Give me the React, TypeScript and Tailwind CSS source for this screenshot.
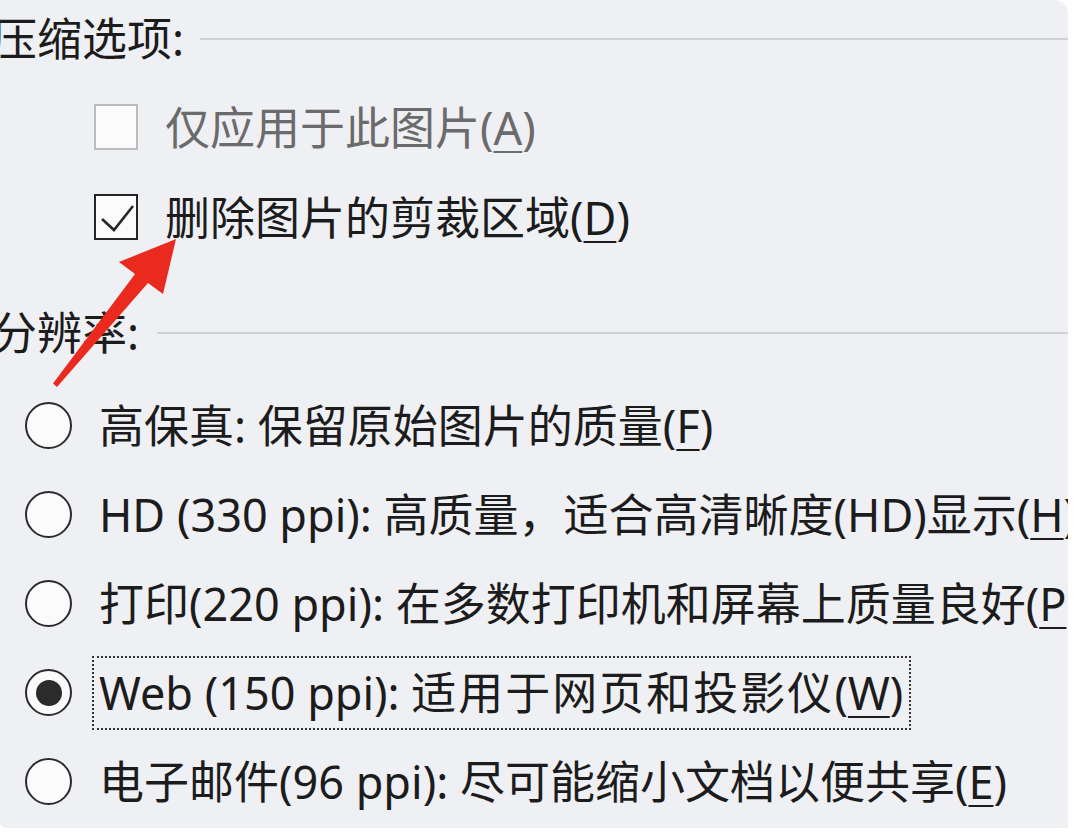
import React from "react";

const font = { fontFamily: '"Noto Sans", "Noto Sans CJK SC", sans-serif' };

function Header({ text, gap }: { text: string; gap: string }) {
  return (
    <div className="flex h-[76px] items-center">
      <span className="ml-[-8px] whitespace-nowrap text-[45px] leading-none text-[#1c1c1c]">{text}</span>
      <div className={`${gap} mt-[2px] h-[2px] flex-1 bg-[#cfd1d4]`} />
    </div>
  );
}

function Check({ checked, disabled, label, acc }: { checked?: boolean; disabled?: boolean; label: string; acc: string }) {
  return (
    <div className="flex h-[90px] items-center pl-[94px]">
      <div
        className={
          disabled
            ? "flex h-[46px] w-[44px] items-center justify-center border-2 border-[#bdbdbd] bg-[#fbfbfb]"
            : "flex h-[46px] w-[44px] items-center justify-center border-[2.5px] border-[#242424] bg-[#fbfbfb]"
        }
      >
        {checked && (
          <svg width="39" height="41" viewBox="0 0 39 41">
            <path d="M5 22 L17 33 L36 9" fill="none" stroke="#262626" strokeWidth="2.6" />
          </svg>
        )}
      </div>
      <span
        className={
          disabled
            ? "ml-[27px] whitespace-nowrap text-[45px] leading-none text-[#6b6b6b]"
            : "ml-[27px] whitespace-nowrap text-[45px] leading-none text-[#1c1c1c]"
        }
      >
        {label}(<span className="underline decoration-2 underline-offset-[6px]">{acc}</span>)
      </span>
    </div>
  );
}

function Radio({
  selected,
  prefix,
  label,
  acc,
  focus,
}: {
  selected?: boolean;
  prefix?: string;
  label: string;
  acc: string;
  focus?: boolean;
}) {
  return (
    <div className="flex h-[89px] items-center pl-[25px]">
      <div className="flex h-[47px] w-[47px] shrink-0 items-center justify-center rounded-full border-[2.5px] border-[#2b2b2b] bg-[#fbfbfb]">
        {selected && <div className="h-[26px] w-[26px] rounded-full bg-[#2b2b2b]" />}
      </div>
      <span
        className={
          focus
            ? "ml-[20px] flex h-[74px] items-center whitespace-nowrap border-2 border-dotted border-[#333] pl-[5px] pr-[6px] text-[45px] leading-none text-[#1c1c1c]"
            : "ml-[27px] whitespace-nowrap text-[45px] leading-none text-[#1c1c1c]"
        }
      >
        <span>
          {prefix}
          <span className={focus ? "tracking-[2px]" : ""}>{label}</span>(
          <span className="underline decoration-2 underline-offset-[6px]">{acc}</span>)
        </span>
      </span>
    </div>
  );
}

export default function App() {
  return (
    <div className="relative h-[832px] w-[1074px] overflow-hidden bg-white" style={font}>
      <div className="h-[828px] w-[1068px] overflow-hidden rounded-tr-[14px] rounded-bl-[6px] bg-[#eff0f4]">
        <Header text="压缩选项:" gap="ml-[16px]" />
        <div className="mt-[6px]">
          <Check disabled label="仅应用于此图片" acc="A" />
          <Check checked label="删除图片的剪裁区域" acc="D" />
        </div>
        <div className="mt-[32px]">
          <Header text="分辨率:" gap="ml-[18px]" />
        </div>
        <div className="mt-[11px]">
          <Radio label="高保真: 保留原始图片的质量" acc="F" />
          <Radio label="HD (330 ppi): 高质量，适合高清晰度(HD)显示" acc="H" />
          <Radio label="打印(220 ppi): 在多数打印机和屏幕上质量良好" acc="P" />
          <Radio selected focus prefix="Web (150 ppi): " label="适用于网页和投影仪" acc="W" />
          <Radio label="电子邮件(96 ppi): 尽可能缩小文档以便共享" acc="E" />
        </div>
      </div>
      <svg className="pointer-events-none absolute left-0 top-0" width="1074" height="832" viewBox="0 0 1074 832">
        <polygon
          points="53,383.5 135,274 119,262 176,239 163,294 148,283 57,387"
          fill="#ea2a1f"
        />
      </svg>
    </div>
  );
}
